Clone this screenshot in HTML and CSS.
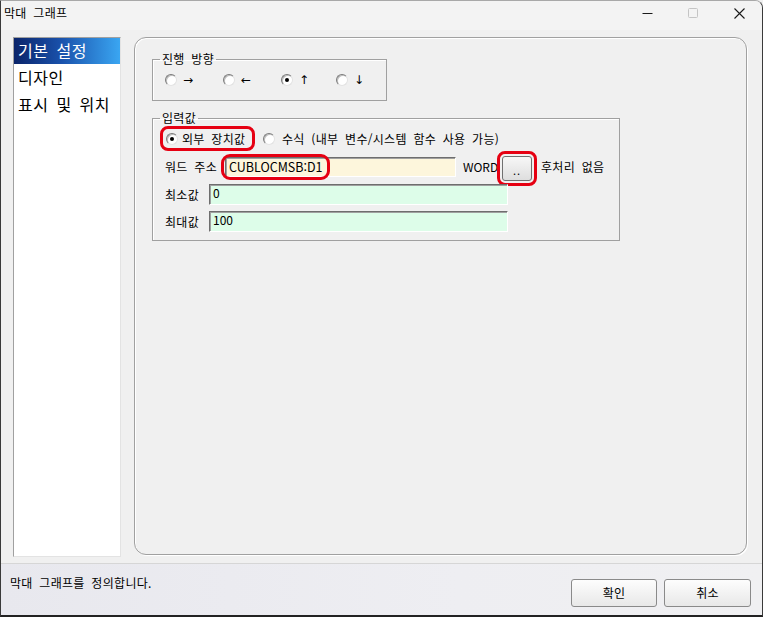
FILE: index.html
```html
<!DOCTYPE html>
<html lang="ko">
<head>
<meta charset="utf-8">
<title>막대 그래프</title>
<link rel="stylesheet" href="styles.css">
</head>
<body>
<div class="window">
  <div class="titlebar">
    <span class="title">막대 그래프</span>
    <div class="controls">
      <svg class="ctl" width="46" height="29" viewBox="0 0 46 29"><line x1="18.5" y1="12.5" x2="28.5" y2="12.5" stroke="#1a1a1a" stroke-width="1"/></svg>
      <svg class="ctl" width="46" height="29" viewBox="0 0 46 29"><rect x="18.5" y="7.5" width="9" height="9" rx="1" fill="none" stroke="#c4c4c4" stroke-width="1"/></svg>
      <svg class="ctl" width="46" height="29" viewBox="0 0 46 29"><path d="M18.5 7.5 L28.5 17.5 M28.5 7.5 L18.5 17.5" stroke="#1a1a1a" stroke-width="1.1" fill="none"/></svg>
    </div>
  </div>
  <div class="content">
    <ul class="nav">
      <li class="sel">기본 설정</li>
      <li>디자인</li>
      <li>표시 및 위치</li>
    </ul>
    <div class="panel">
      <fieldset class="group g1">
        <legend>진행 방향</legend>
        <div class="dirs">
          <div class="opt d1"><span class="radio"></span><span class="arrow">→</span></div>
          <div class="opt d2"><span class="radio"></span><span class="arrow">←</span></div>
          <div class="opt d3"><span class="radio on"></span><span class="arrow">↑</span></div>
          <div class="opt d4"><span class="radio"></span><span class="arrow">↓</span></div>
        </div>
      </fieldset>
      <fieldset class="group g2">
        <legend>입력값</legend>
        <div class="row r1">
          <div class="opt mark"><span class="radio on"></span><span>외부 장치값</span></div>
          <div class="opt formula"><span class="radio"></span><span>수식 (내부 변수/시스템 함수 사용 가능)</span></div>
        </div>
        <div class="row r2">
          <span class="lbl lbl-addr">워드 주소</span>
          <span class="field addr"><span class="val">CUBLOCMSB:D1</span><span class="hl"></span></span>
          <span class="unit">WORD</span>
          <span class="btnmark"><span class="dots">..</span></span>
          <span class="post">후처리 없음</span>
        </div>
        <div class="row r3">
          <span class="lbl lbl-num">최소값</span>
          <span class="field num"><span class="val">0</span></span>
        </div>
        <div class="row r4">
          <span class="lbl lbl-num">최대값</span>
          <span class="field num"><span class="val">100</span></span>
        </div>
      </fieldset>
    </div>
  </div>
  <div class="status">
    <span class="msg">막대 그래프를 정의합니다.</span>
    <div class="buttons">
      <div class="btn ok">확인</div>
      <div class="btn cancel">취소</div>
    </div>
  </div>
</div>
</body>
</html>
```
FILE: styles.css
```css
html, body {
  margin: 0;
  padding: 0;
  background: #f0f0f0;
}
body {
  font-family: "Noto Sans CJK KR", "Noto Sans", sans-serif;
  font-size: 12px;
  color: #000;
  word-spacing: 3px;
  letter-spacing: 0.3px;
}
.window {
  width: 763px;
  height: 617px;
  box-sizing: border-box;
  border: 1px solid #3a3a3a;
  border-top-color: #a8a8a8;
  border-bottom-width: 2px;
  border-bottom-color: #222;
  border-top-right-radius: 8px;
  background: #f0f0f0;
  display: flex;
  flex-direction: column;
  overflow: hidden;
}
.titlebar {
  height: 29px;
  flex: none;
  display: flex;
  justify-content: space-between;
  background: #f3f3f3;
}
.title {
  padding: 5px 0 0 3px;
  line-height: 14px;
  font-size: 12px;
}
.controls {
  display: flex;
}
.ctl {
  display: block;
}
.content {
  height: 533px;
  flex: none;
  box-sizing: border-box;
  display: flex;
  align-items: flex-start;
  gap: 13px;
  padding: 7px 0 0 12px;
}
.nav {
  width: 108px;
  height: 520px;
  box-sizing: border-box;
  margin: 0;
  padding: 0;
  list-style: none;
  background: #fff;
  border: 1px solid;
  border-color: #a0a0a0 #e3e3e3 #e3e3e3 #a0a0a0;
  font-size: 16px;
  letter-spacing: 0.5px;
}
.nav li {
  height: 27px;
  line-height: 25px;
  padding-left: 4px;
  white-space: nowrap;
}
.nav li.sel {
  height: 26px;
  margin-bottom: 1px;
  color: #fff;
  background: linear-gradient(to right, #0a246a 0%, #1a52ac 45%, #3aa6f2 100%);
}
.panel {
  width: 613px;
  height: 518px;
  box-sizing: border-box;
  border: 1px solid #a0a0a0;
  border-radius: 12px;
  box-shadow: inset 1px 1px 0 #ffffff, 1px 1px 0 #ffffff;
  padding: 14px 0 0 17px;
}
.group {
  margin: 0;
  padding: 7px 0 13px 7px;
  border: 1px solid #a0a0a0;
  box-shadow: inset 1px 1px 0 #fff;
  box-sizing: border-box;
  min-inline-size: 0;
}
.group legend {
  padding: 0 2px;
  line-height: 14px;
  font-size: 12px;
}
.g1 {
  width: 235px;
}
.g2 {
  width: 468px;
  margin-top: 10px;
  padding: 1px 0 8px 7px;
}
.dirs {
  display: flex;
  height: 14px;
  padding-left: 5px;
}
.opt {
  display: flex;
  align-items: center;
  gap: 6px;
  white-space: nowrap;
}
.d1, .d2 { width: 58px; }
.d3 { width: 55px; }
.arrow {
  font-family: "DejaVu Sans", sans-serif;
  font-size: 12px;
  line-height: 14px;
}
.radio {
  width: 12px;
  height: 12px;
  box-sizing: border-box;
  border-radius: 50%;
  border: 1px solid;
  border-color: #7a7a7a #e2e2e2 #e2e2e2 #7a7a7a;
  background: #fff;
  box-shadow: inset 1px 1px 0 #bdbdbd;
  display: flex;
  align-items: center;
  justify-content: center;
  flex: none;
}
.radio.on::after {
  content: "";
  width: 4px;
  height: 4px;
  border-radius: 50%;
  background: #000;
}
.row {
  display: flex;
  align-items: center;
  white-space: nowrap;
}
.r1 {
  height: 25px;
}
.mark {
  width: 95px;
  height: 25px;
  box-sizing: border-box;
  border: 3px solid #e60012;
  border-radius: 8px;
  padding-left: 3px;
  gap: 4px;
}
.formula {
  margin-left: 8px;
  gap: 7px;
}
.r2 {
  height: 32px;
}
.lbl {
  margin-left: 5px;
  line-height: 14px;
}
.lbl-addr {
  width: 60px;
}
.lbl-num {
  width: 44px;
}
.field {
  position: relative;
  box-sizing: border-box;
  border: 1px solid;
  border-color: #6e6e6e #ffffff #ffffff #6e6e6e;
  box-shadow: inset 1px 1px 0 #a0a0a0;
  display: flex;
  align-items: flex-start;
  letter-spacing: 0;
  word-spacing: 0;
}
.val {
  line-height: 14px;
  padding: 1px 0 0 3px;
}
.addr {
  width: 231px;
  height: 20px;
  background: #fdf6dc;
}
.addr .val {
  font-size: 12.5px;
  padding-top: 2px;
}
.hl {
  position: absolute;
  left: -5px;
  top: -4px;
  width: 109px;
  height: 26px;
  box-sizing: border-box;
  border: 3px solid #e60012;
  border-radius: 9px;
}
.unit {
  width: 34px;
  margin-left: 7px;
  line-height: 14px;
  letter-spacing: 0;
}
.btnmark {
  width: 40px;
  height: 35px;
  box-sizing: border-box;
  border: 3px solid #e60012;
  border-radius: 8px;
  padding: 2px;
  margin-top: 3px;
  display: flex;
}
.dots {
  flex: 1;
  box-sizing: border-box;
  border: 1px solid #707070;
  border-radius: 3px;
  background: linear-gradient(#f7f7f7, #dedede);
  display: flex;
  align-items: flex-end;
  justify-content: center;
  line-height: 14px;
  padding-bottom: 3px;
  font-size: 11px;
  letter-spacing: 1px;
}
.post {
  margin-left: 4px;
  line-height: 14px;
}
.r3 {
  height: 21px;
  margin-top: 1px;
}
.r4 {
  height: 21px;
  margin-top: 6px;
}
.num {
  width: 299px;
  height: 21px;
  background: #ddfde9;
}
.status {
  height: 52px;
  flex: none;
  box-sizing: border-box;
  border-top: 1px solid #d6d6d6;
  display: flex;
  justify-content: space-between;
  align-items: flex-start;
  padding: 11px 11px 0 9px;
  background: linear-gradient(to right, #e8e8ee, #eeeef2 60%, #f0f0f2);
}
.msg {
  line-height: 16px;
}
.buttons {
  display: flex;
  gap: 7px;
  margin-top: 4px;
}
.btn {
  height: 28px;
  box-sizing: border-box;
  border: 1px solid #8a8a8a;
  border-radius: 3px;
  background: linear-gradient(#fdfdfd, #e8e8e8);
  display: flex;
  align-items: center;
  justify-content: center;
  line-height: 14px;
}
.ok { width: 86px; }
.cancel { width: 87px; }
```
